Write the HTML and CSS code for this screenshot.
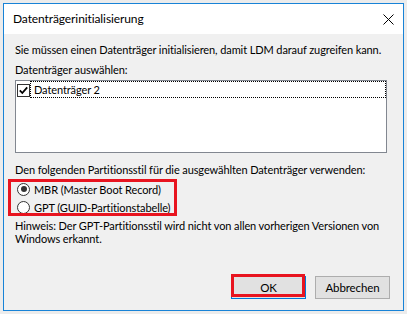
FILE: index.html
```html
<!DOCTYPE html>
<html lang="de">
<head>
<meta charset="utf-8">
<title>Datenträgerinitialisierung</title>
<link rel="stylesheet" href="styles.css">
</head>
<body>
<div class="window">
  <div class="titlebar">
    <span class="title">Datenträgerinitialisierung</span>
    <svg class="close" width="11" height="11" viewBox="0 0 11 11"><path d="M0.5 0.5 L10.5 10.5 M10.5 0.5 L0.5 10.5" stroke="#000" stroke-width="1" fill="none"/></svg>
  </div>
  <div class="content">
    <p class="line first">Sie müssen einen Datenträger initialisieren, damit LDM darauf zugreifen kann.</p>
    <p class="line second">Datenträger auswählen:</p>
    <div class="listbox">
      <div class="item">
        <span class="checkbox"><svg width="11" height="11" viewBox="0 0 11 11"><path d="M1.8 5.3 L4.3 8 L9.2 2.3" stroke="#000" stroke-width="1.8" fill="none"/></svg></span>
        <span class="item-label">Datenträger 2</span>
      </div>
    </div>
    <p class="line third">Den folgenden Partitionsstil für die ausgewählten Datenträger verwenden:</p>
    <div class="radios">
      <div class="radio-row"><span class="radio checked"></span><span>MBR (Master Boot Record)</span></div>
      <div class="radio-row"><span class="radio"></span><span>GPT (GUID-Partitionstabelle)</span></div>
    </div>
    <p class="note">Hinweis: Der GPT-Partitionsstil wird nicht von allen vorherigen Versionen von<br>Windows erkannt.</p>
    <div class="buttons">
      <div class="btn default">OK</div>
      <div class="btn">Abbrechen</div>
    </div>
  </div>
</div>
</body>
</html>
```
FILE: styles.css
```css
html, body { margin: 0; padding: 0; }
body {
  background: #ececec;
  font-family: Lato, "Liberation Sans", sans-serif;
  font-size: 11px;
  letter-spacing: -0.1px;
  color: #000;
  padding: 3px 0 0 3px;
}
.window {
  width: 399px;
  height: 306px;
  border: 1px solid #1883d7;
  display: flex;
  flex-direction: column;
  background: #f0f0f0;
}
.titlebar {
  height: 30px;
  background: #fff;
  display: flex;
  align-items: center;
  justify-content: space-between;
  padding: 0 9px 0 9px;
}
.title { font-size: 12px; line-height: 30px; }
.close { display: block; }
.content {
  flex: 1;
  display: flex;
  flex-direction: column;
  padding: 0 13px 11px 11px;
}
.line { margin: 0; line-height: 14px; white-space: nowrap; }
.first { margin-top: 9px; }
.second { margin-top: 6px; }
.listbox {
  margin-top: 3px;
  width: 370px;
  height: 71px;
  border: 1px solid #828790;
  background: #fff;
}
.item {
  display: flex;
  align-items: flex-start;
  padding-left: 1px;
  height: 17px;
}
.checkbox {
  width: 11px;
  height: 11px;
  border: 1px solid #333;
  background: #fff;
  margin-top: 3px;
  display: block;
}
.checkbox svg { display: block; }
.item-label {
  flex: 1;
  height: 15px;
  border: 1px dotted #000;
  padding-left: 3px;
  line-height: 15px;
}
.third { margin-top: 10px; }
.radios {
  margin-top: 5px;
  margin-left: -4px;
  width: 163px;
  height: 31px;
  outline: 3px solid #e8141f;
  padding-left: 4px;
  box-sizing: border-box;
}
.radio-row {
  display: flex;
  align-items: center;
  height: 16px;
  margin-top: -1px;
  margin-left: 2px;
}
.radio-row + .radio-row { margin-top: 2px; }
.radio {
  width: 11px;
  height: 11px;
  border: 1px solid #333;
  border-radius: 50%;
  background: #fff;
  margin-right: 4px;
  display: flex;
  align-items: center;
  justify-content: center;
}
.radio.checked::before {
  content: "";
  width: 6px;
  height: 6px;
  border-radius: 50%;
  background: #333;
}
.note {
  margin: 6px 0 0 0;
  line-height: 13px;
  white-space: nowrap;
}
.buttons {
  margin-top: auto;
  display: flex;
  justify-content: flex-end;
  gap: 9px;
}
.btn {
  width: 73px;
  height: 21px;
  border: 1px solid #adadad;
  background: #e1e1e1;
  text-align: center;
  line-height: 21px;
  font-size: 11.5px;
  position: relative;
}
.btn.default { border-color: #0078d7; }
.btn.default::after {
  content: "";
  position: absolute;
  left: -1px;
  right: 0;
  top: -3px;
  bottom: 1px;
  border: 3px solid #e8141f;
}
```
